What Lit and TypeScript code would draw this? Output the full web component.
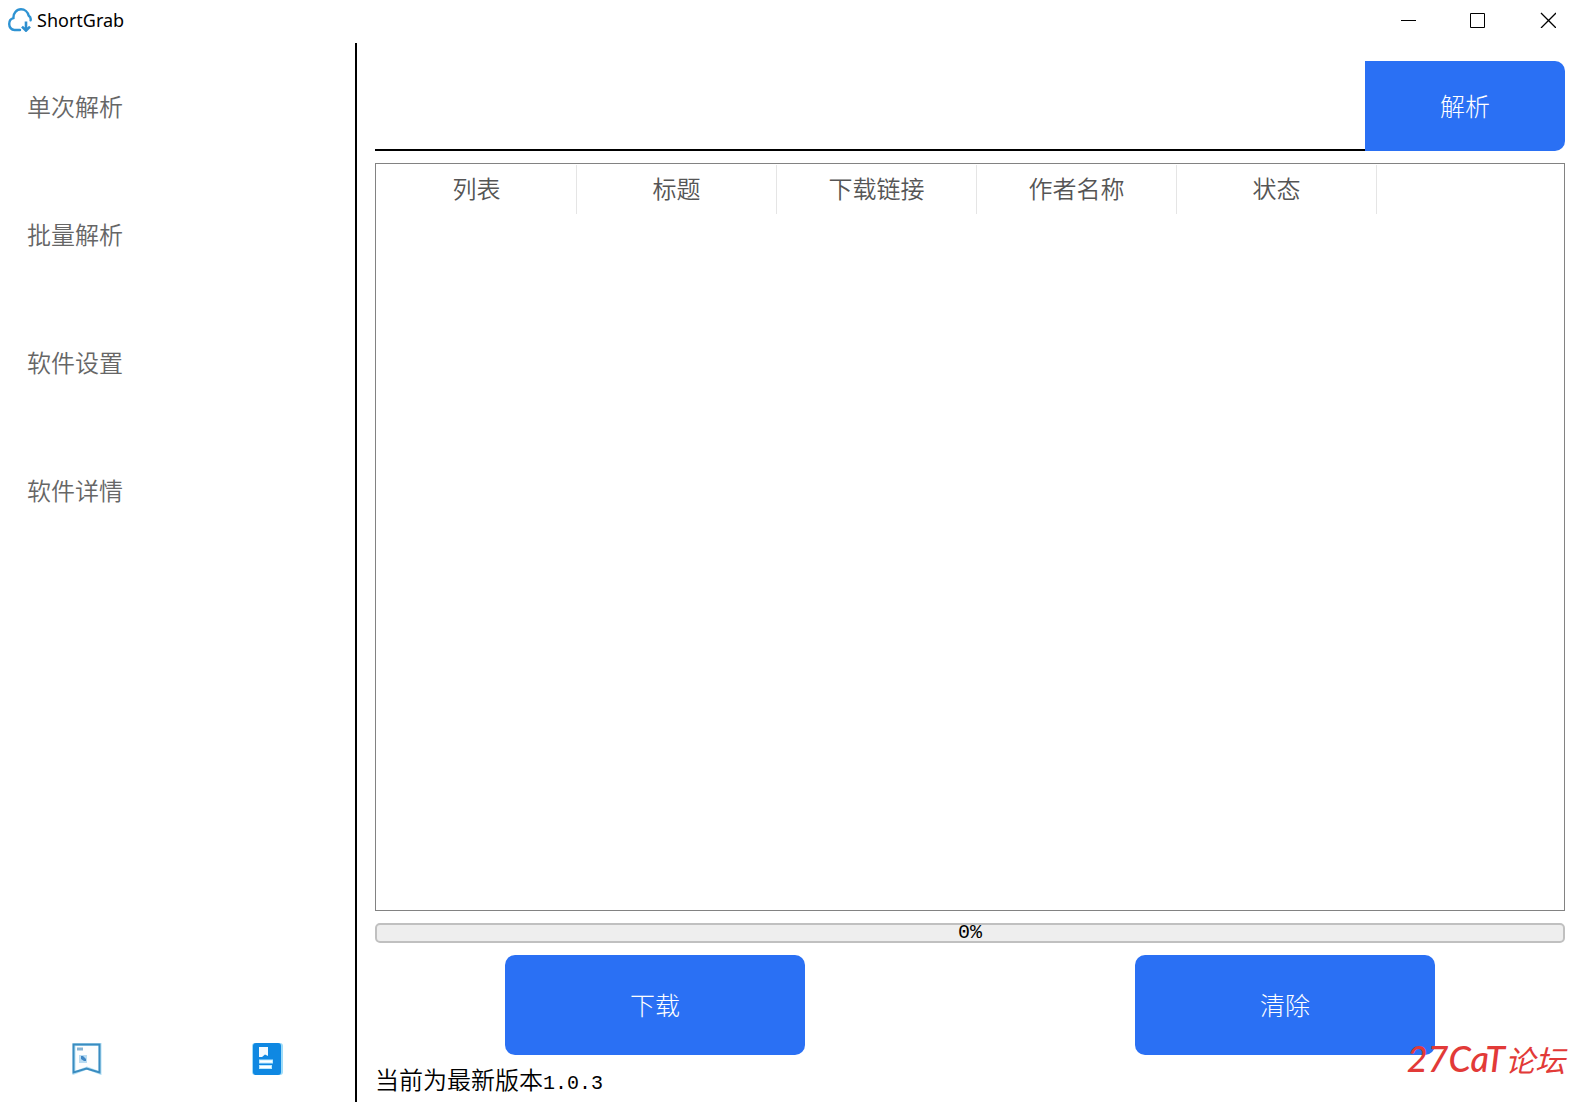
import { LitElement, html, css, svg } from "lit";
import { customElement, state } from "lit/decorators.js";

const cloudIcon = svg`
  <path d="M12 22H6.500C3.200 22 1.200 19 1.200 16C1.200 13 3 10.800 5.500 10.200C5 5.500 8.500 1.300 13 1.300C16.800 1.300 19.800 4 20.600 7.600C22.300 8.600 23 10.300 22.600 12.300"
    fill="none" stroke="#2e93d3" stroke-width="2.400" stroke-linecap="round" stroke-linejoin="round"/>
  <path d="M18 13.500V22M14 18.600L18 22.600L22 18.600" fill="none" stroke="#2e8fcf" stroke-width="2.600"/>`;

const bannerIcon = svg`
  <path d="M2 1.500H28V30L15 25L2 30Z" fill="#fdfefe" stroke="#b5e0f5" stroke-width="3"/>
  <path d="M1.500 1.500H27.500V29.500L14.500 25.500L1.500 29.500Z" fill="none" stroke="#3a8cc0" stroke-width="2"/>
  <path d="M5 6H11" stroke="#86b4d4" stroke-width="3"/>
  <rect x="7" y="12" width="8" height="8" fill="#b9dcf2"/>
  <path d="M9 13H11L14 16V18H12L9 16Z" fill="#3f86c4"/>`;

const documentIcon = svg`
  <rect x="0" y="0" width="31" height="32" rx="3" fill="#9fdcf8"/>
  <rect x="1" y="0" width="28" height="32" rx="3" fill="#0f88e2"/>
  <path d="M7 4H16V13L13 11.500L10 14H7Z" fill="#f4fbff"/>
  <path d="M7 18.500H21M7 24H20" stroke="#b9eaff" stroke-width="4"/>
  <path d="M8 18.500H20M8 24H19" stroke="#fff" stroke-width="2"/>`;

@customElement("app-root")
export class AppRoot extends LitElement {
  static styles = css`
    :host {
      display: block;
      font-family: "Noto Sans CJK SC", sans-serif;
      font-size: 24px;
      line-height: 24px;
      color: #000;
      background: #fff;
    }
    * { box-sizing: border-box; }
    button { font: inherit; color: inherit; background: none; border: 0; padding: 0; margin: 0; }
    svg { display: block; }
    .window { min-height: 100vh; display: flex; flex-direction: column; position: relative; }
    .titlebar { height: 43px; padding-left: 8px; display: flex; align-items: flex-start; }
    .brand { display: flex; align-items: center; gap: 5px; height: 40px; flex: 1; }
    .name { font-family: "Noto Sans", sans-serif; font-size: 18px; font-weight: 400; margin: 0; }
    .controls { display: flex; gap: 8px; }
    .control { width: 62px; height: 40px; display: grid; place-items: center; }
    .body { flex: 1; display: flex; }
    .sidebar {
      flex: 0 0 357px;
      border-right: 2px solid #000;
      display: flex;
      flex-direction: column;
      justify-content: space-between;
    }
    .nav { display: flex; flex-direction: column; }
    .nav-item {
      height: 128px;
      padding: 0 0 3px 27px;
      text-align: left;
      color: #666;
      font-weight: 350;
    }
    .tools { display: flex; justify-content: space-around; gap: 4px; padding-bottom: 27px; }
    .main {
      flex: 1;
      min-width: 0;
      padding: 18px 14px 11px 18px;
      display: flex;
      flex-direction: column;
      gap: 12px;
    }
    .search { display: flex; height: 90px; }
    .url {
      flex: 1;
      min-width: 0;
      font: inherit;
      border: 0;
      border-bottom: 2px solid #000;
      padding: 0 8px;
      background: none;
      outline: 0;
      border-radius: 0;
    }
    .primary {
      background: #2a70f4;
      color: #fff;
      border-radius: 10px;
      font-size: 25px;
      font-weight: 300;
      padding-bottom: 3px;
    }
    .parse { width: 200px; border-radius: 0 10px 10px 0; }
    .list { flex: 1; border: 1px solid #828282; padding: 1px; }
    .grid { width: 100%; border-collapse: separate; border-spacing: 0; table-layout: fixed; }
    .grid th {
      height: 49px;
      padding: 0 0 3px;
      width: 200px;
      font-weight: 350;
      color: #555;
      border-right: 1px solid #e5e5e5;
    }
    .grid .rest { width: auto; border-right: 0; }
    .progress {
      height: 20px;
      border: 2px solid #c0c0c0;
      border-radius: 5px;
      background: #eee;
      display: flex;
      justify-content: center;
      align-items: center;
    }
    .half { font-family: "Liberation Mono", monospace; font-size: 20px; }
    .actions { display: grid; grid-template-columns: 1fr 1fr; gap: 70px; justify-items: center; }
    .action { width: 300px; height: 100px; }
    .status { margin: 0; height: 24px; font-weight: 350; }
    .watermark {
      position: absolute;
      right: 14px;
      bottom: 22px;
      color: #e23a38;
      font-family: Lato, "Noto Sans CJK SC", sans-serif;
      font-size: 36px;
      font-style: italic;
      line-height: 40px;
      font-weight: 500;
      white-space: nowrap;
    }
    .forum { font-size: 30px; font-weight: 400; }
  `;

  @state() private progress = 0;

  private nav = ["单次解析", "批量解析", "软件设置", "软件详情"];
  private columns = ["列表", "标题", "下载链接", "作者名称", "状态"];

  render() {
    return html`
      <div class="window">
        <header class="titlebar">
          <div class="brand">
            <svg width="24" height="24" viewBox="0 0 24 24" aria-hidden="true">${cloudIcon}</svg>
            <h1 class="name">ShortGrab</h1>
          </div>
          <div class="controls">
            <button class="control" aria-label="最小化">
              <svg width="16" height="16" viewBox="0 0 16 16"><path d="M1 8.500H16" stroke="#000"/></svg>
            </button>
            <button class="control" aria-label="最大化">
              <svg width="16" height="16" viewBox="0 0 16 16"><path d="M.5 1.500H14.500V15.500H.5Z" fill="none" stroke="#000"/></svg>
            </button>
            <button class="control" aria-label="关闭">
              <svg width="16" height="16" viewBox="0 0 16 16"><path d="M1 1L16 16M16 1L1 16" stroke="#000" stroke-width="1.300"/></svg>
            </button>
          </div>
        </header>
        <div class="body">
          <aside class="sidebar">
            <nav class="nav">
              ${this.nav.map((label) => html`<button class="nav-item">${label}</button>`)}
            </nav>
            <div class="tools">
              <button aria-label="公告"><svg width="31" height="32" viewBox="0 0 31 32">${bannerIcon}</svg></button>
              <button aria-label="文档"><svg width="31" height="32" viewBox="0 0 31 32">${documentIcon}</svg></button>
            </div>
          </aside>
          <main class="main">
            <form class="search" @submit=${(e: Event) => e.preventDefault()}>
              <input class="url" type="text" aria-label="链接" />
              <button class="primary parse">解析</button>
            </form>
            <div class="list">
              <table class="grid">
                <thead>
                  <tr>
                    ${this.columns.map((name) => html`<th scope="col">${name}</th>`)}
                    <td class="rest"></td>
                  </tr>
                </thead>
                <tbody></tbody>
              </table>
            </div>
            <div class="progress" role="progressbar" aria-label="下载进度" aria-valuemin="0" aria-valuemax="100" aria-valuenow=${this.progress}>
              <span class="half">${this.progress}%</span>
            </div>
            <div class="actions">
              <button class="primary action">下载</button>
              <button class="primary action">清除</button>
            </div>
            <p class="status">当前为最新版本<span class="half">1.0.3</span></p>
          </main>
        </div>
        <div class="watermark">27CaT<span class="forum">论坛</span></div>
      </div>
    `;
  }
}
